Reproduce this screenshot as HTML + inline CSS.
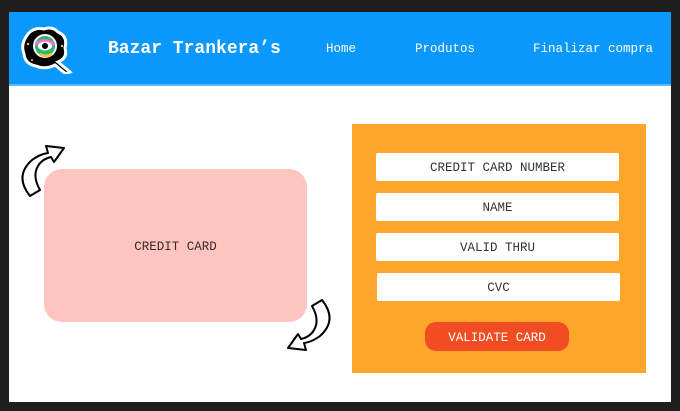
<!DOCTYPE html>
<html><head><style>
body{margin:0;width:680px;height:411px;background:#1e1e1e;position:relative;overflow:hidden;font-family:"Liberation Mono","DejaVu Sans Mono",monospace}
.frame{position:absolute;left:9px;top:12px;width:662px;height:390px;background:#fff}
.hdr{position:absolute;left:9px;top:12px;width:662px;height:72px;background:#0b98fc;border-bottom:2px solid #5db9fb}
.t{position:absolute;color:#fff}
.card{position:absolute;left:44px;top:169px;width:263px;height:153px;background:#fec5c0;border-radius:18px;display:flex;align-items:center;justify-content:center;font-size:12.5px;color:#3a2a2a;padding-top:2px;box-sizing:border-box}
.panel{position:absolute;left:352px;top:124px;width:294px;height:249px;background:#fea62a}
.in{position:absolute;width:243px;height:28px;background:#fff;border-radius:2px;display:flex;align-items:center;justify-content:center;font-size:12.5px;color:#333;padding-top:2px;box-sizing:border-box}
.btn{position:absolute;left:425px;top:322px;width:144px;height:29px;background:#f24c22;border-radius:11px;color:#fff;display:flex;align-items:center;justify-content:center;font-size:12.5px;padding-top:2px;box-sizing:border-box}
</style></head><body>
<div class="frame"></div>
<div class="hdr"></div>
<svg style="position:absolute;left:20px;top:24px" width="55" height="50" viewBox="0 0 55 50">
<path d="M8 10 Q14 3 24 5 Q32 2 38 8 Q48 12 45 24 Q48 34 38 38 L50 48 L46 50 L35 41 Q25 46 16 42 Q5 40 4 30 Q0 20 8 10Z" fill="#000" stroke="#fff" stroke-width="3"/>
<circle cx="25" cy="22" r="11" fill="#2db86a" stroke="#fff" stroke-width="2"/>
<path d="M16 18 Q25 12 34 18 L34 22 Q25 16 16 22Z" fill="#f26fd0"/>
<path d="M20 30 Q25 34 32 30" stroke="#f5c542" stroke-width="3" fill="none"/>
<ellipse cx="25" cy="22" rx="7" ry="4.5" fill="#fff"/><circle cx="25" cy="22" r="3" fill="#000"/>
<circle cx="8" cy="20" r="1.2" fill="#f5c542"/><circle cx="42" cy="22" r="1.2" fill="#f5c542"/><circle cx="12" cy="36" r="1" fill="#f5c542"/>
</svg>
<div class="t" style="left:108px;top:39px;font-size:18px;font-weight:bold">Bazar Trankera’s</div>
<div class="t" style="left:326px;top:42px;font-size:12.5px">Home</div>
<div class="t" style="left:415px;top:42px;font-size:12.5px">Produtos</div>
<div class="t" style="left:533px;top:42px;font-size:12.5px">Finalizar compra</div>
<div class="card">CREDIT CARD</div>
<svg style="position:absolute;left:18px;top:142px" width="50" height="56" viewBox="0 0 50 56">
<path d="M12 54 Q-4 34 14 18 Q22 12 30 11 L28 4 L46 6 L36 20 L33 15 Q24 17 20 24 Q14 34 22 48Z" fill="#fff" stroke="#000" stroke-width="2" stroke-linejoin="round"/>
</svg>
<svg style="position:absolute;left:284px;top:298px" width="50" height="58" viewBox="0 0 50 58">
<path d="M38 2 Q54 22 36 38 Q28 44 20 45 L22 52 L4 50 L14 36 L17 41 Q26 39 30 32 Q36 22 28 8Z" fill="#fff" stroke="#000" stroke-width="2" stroke-linejoin="round"/>
</svg>
<div class="panel"></div>
<div class="in" style="left:376px;top:153px">CREDIT CARD NUMBER</div>
<div class="in" style="left:376px;top:193px">NAME</div>
<div class="in" style="left:376px;top:233px">VALID THRU</div>
<div class="in" style="left:377px;top:273px">CVC</div>
<div class="btn">VALIDATE CARD</div>
</body></html>
